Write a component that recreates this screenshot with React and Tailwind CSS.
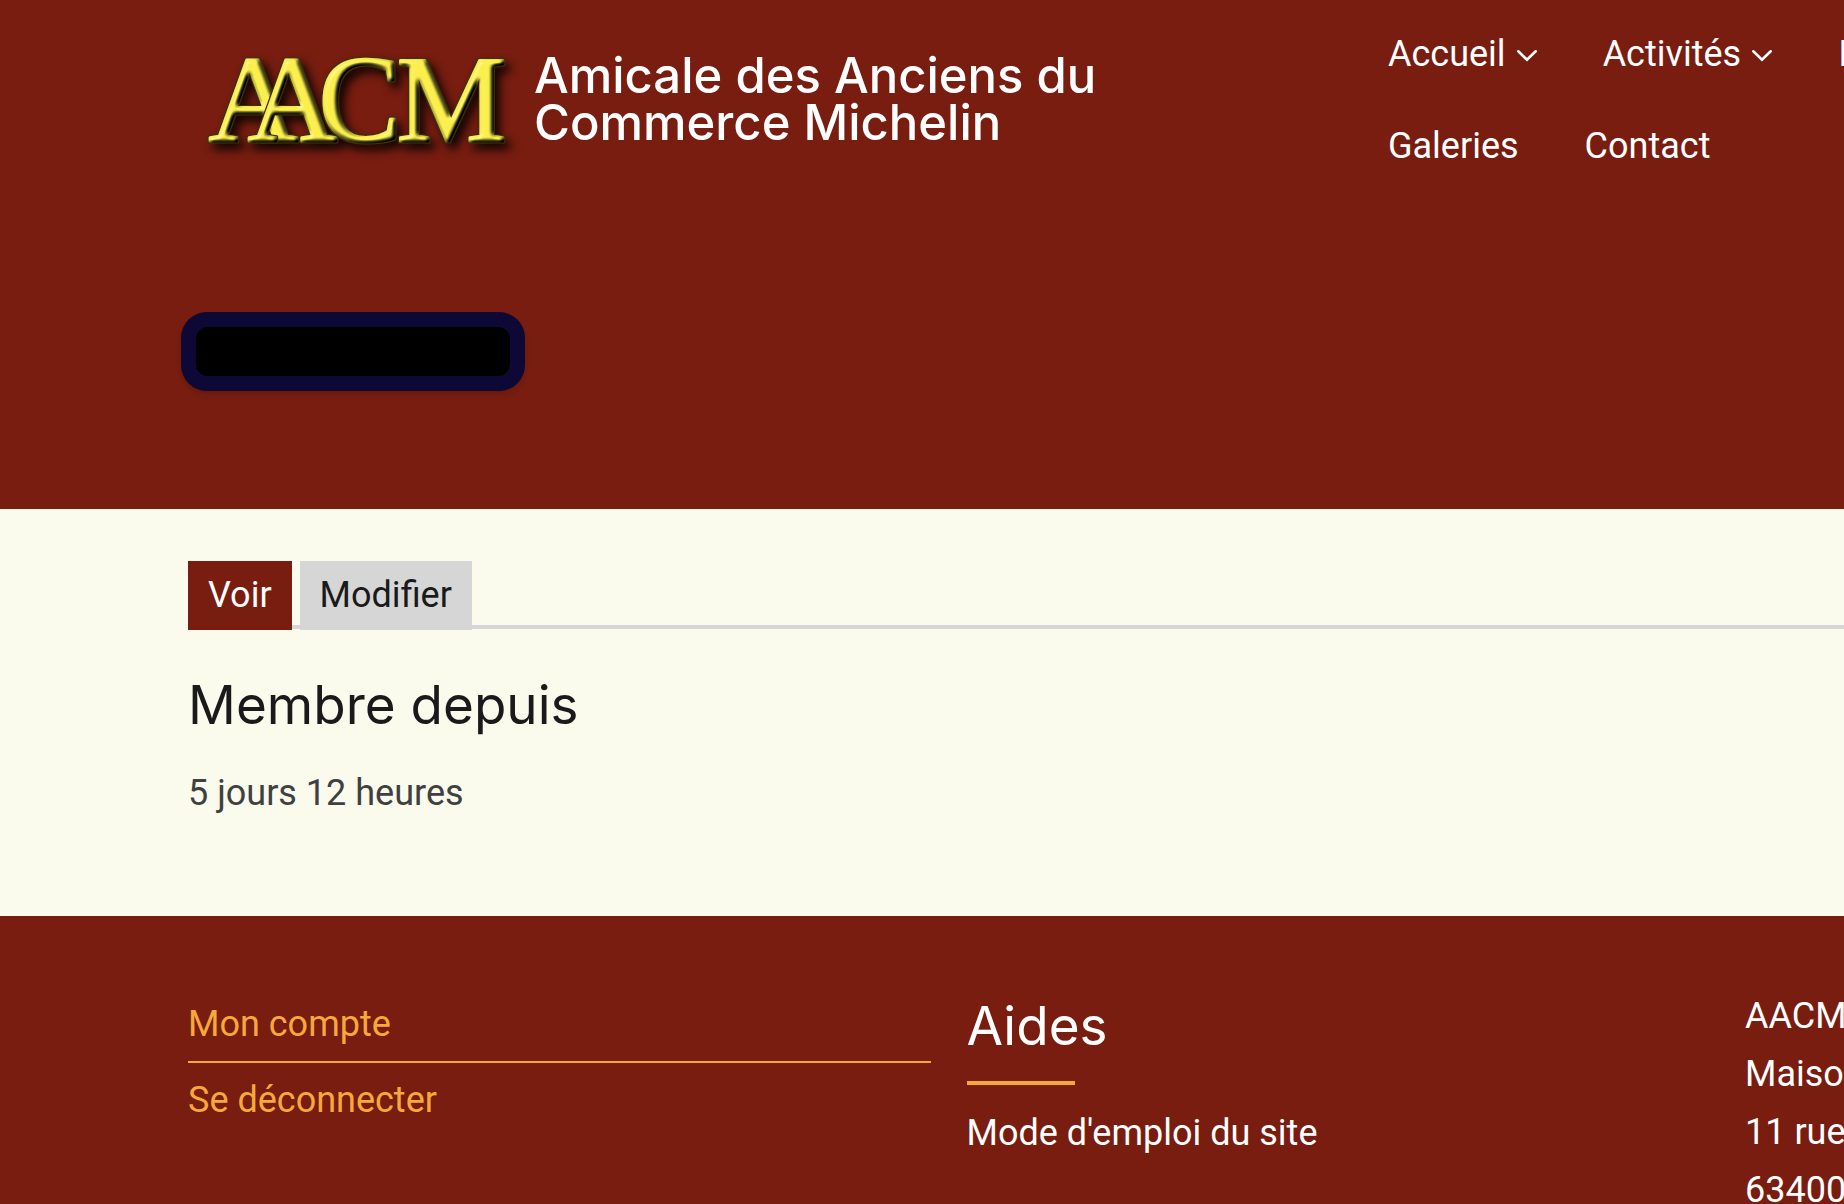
// Main menu, one array per visual row
const menuRows = [
  [
    { label: "Accueil", hasChildren: true },
    { label: "Activités", hasChildren: true },
    { label: "I" },
  ],
  [{ label: "Galeries" }, { label: "Contact" }],
];

const address = ["AACM", "Maison", "11 rue", "63400"];

// Gold embossed letters of the association
function Logo() {
  return (
    <svg
      width="346"
      height="140"
      viewBox="188 30 346 140"
      className="shrink-0"
      role="img"
      aria-label="AACM"
    >
      <defs>
        <filter id="emboss" x="-10%" y="-10%" width="130%" height="140%" colorInterpolationFilters="sRGB">
          <feGaussianBlur in="SourceAlpha" stdDeviation="2.2" result="soft" />
          <feDiffuseLighting
            in="soft"
            surfaceScale="5"
            diffuseConstant="1.25"
            lightingColor="#ffffff"
            result="shade"
          >
            <feDistantLight azimuth="225" elevation="55" />
          </feDiffuseLighting>
          <feBlend in="shade" in2="SourceGraphic" mode="multiply" result="toned" />
          <feComposite in="toned" in2="SourceAlpha" operator="in" result="body" />
          <feSpecularLighting
            in="soft"
            surfaceScale="4"
            specularConstant="0.5"
            specularExponent="30"
            lightingColor="#ffffff"
            result="shine"
          >
            <feDistantLight azimuth="225" elevation="40" />
          </feSpecularLighting>
          <feComposite in="shine" in2="SourceAlpha" operator="in" result="shineIn" />
          {/* Thin dark line round every letter */}
          <feMorphology in="SourceAlpha" operator="dilate" radius="0.6" result="grown" />
          <feFlood floodColor="#3a3208" result="dark" />
          <feComposite in="dark" in2="grown" operator="in" result="outline" />
          <feMerge>
            <feMergeNode in="outline" />
            <feMergeNode in="body" />
            <feMergeNode in="shineIn" />
          </feMerge>
        </filter>
      </defs>
      <g
        fontFamily="'Liberation Serif', serif"
        fontSize="123"
        fill="#fbef4a"
        stroke="#fbef4a"
        strokeWidth="3"
        strokeLinejoin="round"
        className="drop-shadow-[5px_6px_5px_rgba(0,0,0,0.85)]"
      >
        <text x="209" y="141" filter="url(#emboss)">A</text>
        <text x="248" y="141" filter="url(#emboss)">A</text>
        <text x="319" y="141" filter="url(#emboss)">C</text>
        <text x="397" y="141" filter="url(#emboss)">M</text>
      </g>
    </svg>
  );
}

function Chevron() {
  return (
    <svg
      width="20"
      height="12"
      viewBox="0 0 20 12"
      fill="none"
      stroke="currentColor"
      strokeWidth="2.6"
      strokeLinecap="round"
      className="mt-1"
      aria-hidden="true"
    >
      <path d="M1.3 1.3 10 9.8l8.7-8.5" />
    </svg>
  );
}

function Header() {
  return (
    <header className="bg-[#781d10] pl-[188px] pb-[118px] text-white">
      <div className="flex items-start justify-between">
        <a href="#" className="flex items-start pt-[30px]">
          <Logo />
          <span className="pt-[22px] font-[Inter,sans-serif] text-[49px] leading-[47px] font-medium whitespace-nowrap">
            Amicale des Anciens du
            <br />
            Commerce Michelin
          </span>
        </a>
        <nav className="flex w-[456px] shrink-0 flex-col gap-[34px] overflow-hidden pt-[25px]">
          {menuRows.map((row, i) => (
            <ul key={i} className="flex gap-[66px]">
              {row.map((item) => (
                <li key={item.label} className="shrink-0">
                  <a href="#" className="flex items-center gap-[11px]">
                    {item.label}
                    {item.hasChildren && <Chevron />}
                  </a>
                </li>
              ))}
            </ul>
          ))}
        </nav>
      </div>
      {/* Page title, hidden behind a solid block */}
      <div className="mt-[137px] -ml-[7px] h-[79px] w-[344px] rounded-[26px] bg-[#0e0836] p-[15px] shadow-md">
        <div className="h-full rounded-xl bg-black" />
      </div>
    </header>
  );
}

function Profile() {
  return (
    <main className="bg-[#fafaed] pt-[52px] pb-[94px] pl-[188px]">
      <ul className="flex items-end gap-2 border-b-4 border-[#d6d6d8]">
        <li className="-mb-[5px] bg-[#781d10] px-5 pt-[5px] pb-[6px] text-white">
          <a href="#">Voir</a>
        </li>
        <li className="-mb-[5px] bg-[#d6d6d6] px-5 pt-[5px] pb-[6px] text-[#1a1a1a]">
          <a href="#">Modifier</a>
        </li>
      </ul>
      <h2 className="mt-[41px] font-[Inter,sans-serif] text-[53px] leading-[70px] text-[#1a1a1a]">
        Membre depuis
      </h2>
      <p className="mt-6 text-[#404040]">5 jours 12 heures</p>
    </main>
  );
}

function Footer() {
  return (
    <footer className="grid flex-1 grid-cols-[15fr_15fr_2fr] gap-9 bg-[#781d10] pt-[71px] pl-[188px] text-white">
      <ul className="text-[#f6a93b]">
        <li className="border-b-2 border-[#f6a93b] py-2">
          <a href="#">Mon compte</a>
        </li>
        <li className="py-2">
          <a href="#">Se déconnecter</a>
        </li>
      </ul>
      <div>
        <h2 className="font-[Inter,sans-serif] text-[53px] leading-[78px]">
          Aides
        </h2>
        <div className="mt-4 h-1 w-[108px] bg-[#f6a93b]" />
        <p className="mt-[19px]">
          <a href="#">Mode d'emploi du site</a>
        </p>
      </div>
      <address className="min-w-0 overflow-hidden whitespace-nowrap not-italic">
        {address.map((line) => (
          <p key={line}>{line}</p>
        ))}
      </address>
    </footer>
  );
}

export default function App() {
  return (
    <div className="flex h-screen flex-col overflow-hidden font-[Roboto,sans-serif] text-[36px] leading-[58px]">
      <Header />
      <Profile />
      <Footer />
    </div>
  );
}
